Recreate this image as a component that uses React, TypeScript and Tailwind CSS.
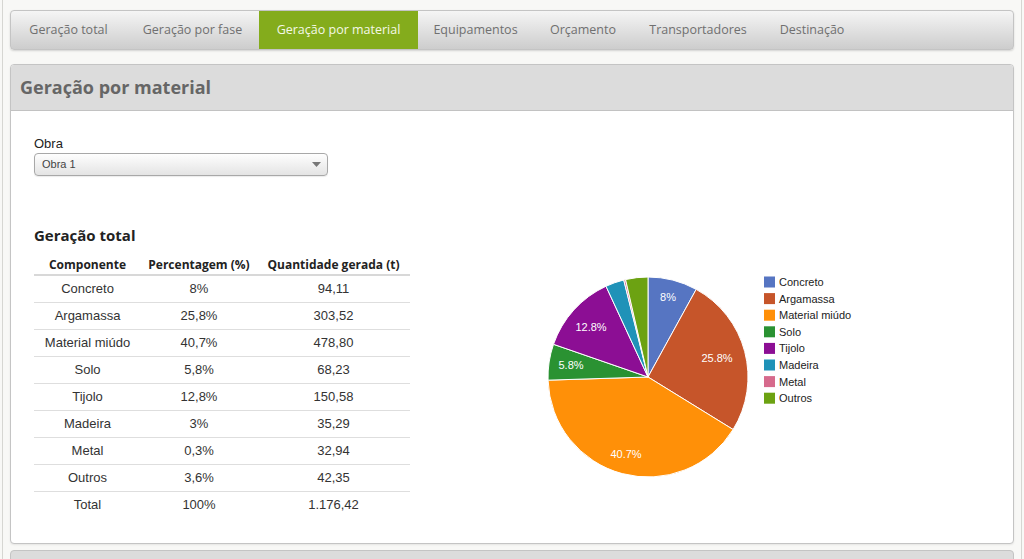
import React from 'react';

const tabs = [
  { label: 'Geração total', w: 'w-[115px]' },
  { label: 'Geração por fase', w: 'w-[133px]' },
  { label: 'Geração por material', w: 'w-[159px]', active: true },
  { label: 'Equipamentos', w: 'w-[115px]' },
  { label: 'Orçamento', w: 'w-[100px]' },
  { label: 'Transportadores', w: 'w-[130px]' },
  { label: 'Destinação', w: 'w-[98px]' },
];

const rows = [
  { name: 'Concreto', pct: '8%', qty: '94,11', v: 8, color: '#5675c2' },
  { name: 'Argamassa', pct: '25,8%', qty: '303,52', v: 25.8, color: '#c6552a' },
  { name: 'Material miúdo', pct: '40,7%', qty: '478,80', v: 40.7, color: '#ff9008' },
  { name: 'Solo', pct: '5,8%', qty: '68,23', v: 5.8, color: '#2a9232' },
  { name: 'Tijolo', pct: '12,8%', qty: '150,58', v: 12.8, color: '#8c0e94' },
  { name: 'Madeira', pct: '3%', qty: '35,29', v: 3, color: '#1f92b8' },
  { name: 'Metal', pct: '0,3%', qty: '32,94', v: 0.3, color: '#d66a8c' },
  { name: 'Outros', pct: '3,6%', qty: '42,35', v: 3.6, color: '#6ca212' },
];

const labels = [
  { t: '8%', x: 148, y: 72 },
  { t: '25.8%', x: 197, y: 133 },
  { t: '40.7%', x: 106, y: 229 },
  { t: '5.8%', x: 51, y: 140 },
  { t: '12.8%', x: 71, y: 102 },
];

function PieChart() {
  const cx = 128;
  const cy = 152;
  const r = 100;
  let acc = 0;
  const slices = rows.map((row) => {
    const a0 = (acc / 100) * Math.PI * 2;
    acc += row.v;
    const a1 = (acc / 100) * Math.PI * 2;
    const x0 = cx + r * Math.sin(a0);
    const y0 = cy - r * Math.cos(a0);
    const x1 = cx + r * Math.sin(a1);
    const y1 = cy - r * Math.cos(a1);
    const large = a1 - a0 > Math.PI ? 1 : 0;
    return (
      <path
        key={row.name}
        d={`M${cx},${cy} L${x0},${y0} A${r},${r} 0 ${large} 1 ${x1},${y1} Z`}
        fill={row.color}
        stroke="#fff"
        strokeWidth={1}
      />
    );
  });

  return (
    <svg width={400} height={290} className="block">
      {slices}
      {labels.map((l) => (
        <text key={l.t} x={l.x} y={l.y} fill="#fff" fontSize={11} fontFamily="'Liberation Sans', Arial, sans-serif" textAnchor="middle" dominantBaseline="central">
          {l.t}
        </text>
      ))}
      {rows.map((row, i) => (
        <g key={row.name}>
          <rect x={244} y={51.5 + i * 16.6} width={11} height={11} fill={row.color} />
          <text x={259} y={57 + i * 16.6} fill="#222" fontSize={11} fontFamily="'Liberation Sans', Arial, sans-serif" dominantBaseline="central">
            {row.name}
          </text>
        </g>
      ))}
    </svg>
  );
}

export default function App() {
  return (
    <div className="w-full h-[559px] overflow-hidden bg-[#f8f8f6] font-['Open_Sans',sans-serif]">
      <div className="mx-[2px] h-full border-x border-[#d6d6d2] px-[7px] pt-[10px]">
        {/* Tabs */}
        <nav className="flex h-[40px] rounded-[4px] border border-[#c4c4c4] bg-gradient-to-b from-[#f5f5f5] to-[#cdcdcd] shadow-[0_1px_2px_rgba(0,0,0,0.15)] overflow-hidden">
          {tabs.map((t) => (
            <div
              key={t.label}
              className={`${t.w} flex items-center justify-center text-[12.5px] ${
                t.active ? 'bg-[#84ac1c] text-[#f4f8e8]' : 'text-[#707070]'
              }`}
            >
              {t.label}
            </div>
          ))}
        </nav>

        {/* Panel */}
        <section className="mt-[14px] h-[480px] rounded-[4px] border border-[#c4c4c4] bg-white overflow-hidden shadow-[0_1px_2px_rgba(0,0,0,0.08)]">
          <header className="h-[46px] bg-[#dcdcdc] border-b border-[#c2c2c2] flex items-center px-[9px]">
            <h1 className="text-[18px] font-bold text-[#666]">Geração por material</h1>
          </header>
          <div className="pl-[23px] pt-[25px]">
            <label className="block text-[13px] leading-[15px] text-[#222] font-['Liberation_Sans',Arial,sans-serif]">Obra</label>
            <div className="mt-[2px] w-[294px] h-[23px] rounded-[4px] border border-[#a8a8a8] bg-gradient-to-b from-[#fefefe] to-[#e4e4e4] flex items-center justify-between pl-[7px] pr-[6px] shadow-[0_1px_1px_rgba(0,0,0,0.08)]">
              <span className="text-[11px] text-[#444] font-['Liberation_Sans',Arial,sans-serif]">Obra 1</span>
              <svg width="9" height="5" viewBox="0 0 9 5"><path d="M0 0 L9 0 L4.5 5 Z" fill="#777" /></svg>
            </div>

            <div className="mt-[49px] flex items-start">
              <div className="w-[377px]">
                <h2 className="text-[15px] leading-[20px] font-bold text-[#222]">Geração total</h2>
                <table className="mt-[11px] w-[376px] border-collapse text-[#333]">
                  <thead>
                    <tr className="border-b-2 border-[#d8d8d8]">
                      <th className="w-[107px] h-[19px] text-[12px] font-bold text-[#222] leading-none">Componente</th>
                      <th className="w-[116px] text-[12px] font-bold text-[#222] leading-none">Percentagem (%)</th>
                      <th className="text-[12px] font-bold text-[#222] leading-none">Quantidade gerada (t)</th>
                    </tr>
                  </thead>
                  <tbody className="font-['Liberation_Sans',Arial,sans-serif] text-[13px]">
                    {rows.map((row) => (
                      <tr key={row.name} className="border-b border-[#dedede] h-[27px]">
                        <td className="text-center">{row.name}</td>
                        <td className="text-center">{row.pct}</td>
                        <td className="text-center">{row.qty}</td>
                      </tr>
                    ))}
                    <tr className="h-[27px]">
                      <td className="text-center">Total</td>
                      <td className="text-center">100%</td>
                      <td className="text-center">1.176,42</td>
                    </tr>
                  </tbody>
                </table>
              </div>
              <div className="ml-[109px]">
                <PieChart />
              </div>
            </div>
          </div>
        </section>

        {/* Next panel */}
        <div className="mt-[6px] h-[20px] rounded-t-[4px] border border-[#c4c4c4] bg-[#dcdcdc]" />
      </div>
    </div>
  );
}
